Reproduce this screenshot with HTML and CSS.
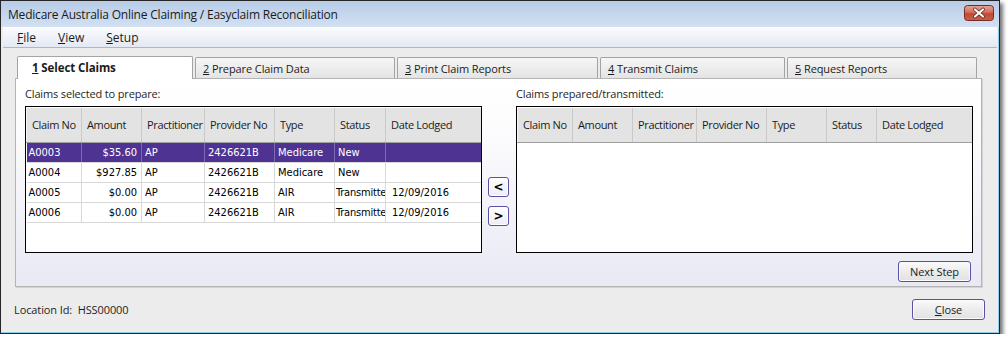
FILE: index.html
```html
<!DOCTYPE html>
<html lang="en">
<head>
<meta charset="utf-8">
<title>Medicare Australia Online Claiming / Easyclaim Reconciliation</title>
<link rel="stylesheet" href="styles.css">
</head>
<body>
<div class="window">
  <div class="titlebar">
    <span class="title">Medicare Australia Online Claiming / Easyclaim Reconciliation</span>
    <svg class="close-x" width="30" height="16" viewBox="0 0 30 16">
      <defs>
        <linearGradient id="cg" x1="0" y1="0" x2="0" y2="1">
          <stop offset="0" stop-color="#e7a597"/>
          <stop offset="0.45" stop-color="#d46f5e"/>
          <stop offset="0.55" stop-color="#c04a36"/>
          <stop offset="1" stop-color="#c9614a"/>
        </linearGradient>
      </defs>
      <rect x="0.5" y="0.5" width="29" height="15" rx="3" fill="url(#cg)" stroke="#7a2a1e"/>
      <path d="M11 4.5 L19 11.5 M19 4.5 L11 11.5" stroke="#5a1e16" stroke-width="3.6" stroke-linecap="round"/>
      <path d="M11 4.5 L19 11.5 M19 4.5 L11 11.5" stroke="#ffffff" stroke-width="2.2" stroke-linecap="round"/>
    </svg>
  </div>
  <div class="menubar">
    <span class="menu"><u>F</u>ile</span>
    <span class="menu"><u>V</u>iew</span>
    <span class="menu"><u>S</u>etup</span>
  </div>
  <div class="content">
    <div class="tabs">
      <div class="tab tab-1 active"><span><u>1</u> Select Claims</span></div>
      <div class="tab tab-2"><span><u>2</u> Prepare Claim Data</span></div>
      <div class="tab tab-3"><span><u>3</u> Print Claim Reports</span></div>
      <div class="tab tab-4"><span><u>4</u> Transmit Claims</span></div>
      <div class="tab tab-5"><span><u>5</u> Request Reports</span></div>
    </div>
    <div class="panel">
      <div class="lists">
        <div class="list-group">
          <div class="list-label">Claims selected to prepare:</div>
          <div class="grid">
            <table>
              <colgroup>
                <col class="c1"><col class="c2"><col class="c3"><col class="c4"><col class="c5"><col class="c6"><col class="c7">
              </colgroup>
              <thead>
                <tr><th>Claim No</th><th>Amount</th><th>Practitioner</th><th>Provider No</th><th>Type</th><th>Status</th><th>Date Lodged</th></tr>
              </thead>
              <tbody>
                <tr class="selected"><td>A0003</td><td class="num">$35.60</td><td>AP</td><td>2426621B</td><td>Medicare</td><td>New</td><td class="date"></td></tr>
                <tr><td>A0004</td><td class="num">$927.85</td><td>AP</td><td>2426621B</td><td>Medicare</td><td>New</td><td class="date"></td></tr>
                <tr><td>A0005</td><td class="num">$0.00</td><td>AP</td><td>2426621B</td><td>AIR</td><td class="status">Transmitted</td><td class="date">12/09/2016</td></tr>
                <tr><td>A0006</td><td class="num">$0.00</td><td>AP</td><td>2426621B</td><td>AIR</td><td class="status">Transmitted</td><td class="date">12/09/2016</td></tr>
              </tbody>
            </table>
          </div>
        </div>
        <div class="movers">
          <button class="mover">&lt;</button>
          <button class="mover">&gt;</button>
        </div>
        <div class="list-group">
          <div class="list-label">Claims prepared/transmitted:</div>
          <div class="grid">
            <table>
              <colgroup>
                <col class="c1"><col class="c2"><col class="c3r"><col class="c4"><col class="c5"><col class="c6r"><col class="c7">
              </colgroup>
              <thead>
                <tr><th>Claim No</th><th>Amount</th><th>Practitioner</th><th>Provider No</th><th>Type</th><th>Status</th><th>Date Lodged</th></tr>
              </thead>
              <tbody></tbody>
            </table>
          </div>
        </div>
      </div>
      <div class="panel-actions">
        <button class="btn">Next Step</button>
      </div>
    </div>
    <div class="footer">
      <span class="location">Location Id:&nbsp; HSS00000</span>
      <button class="btn btn-close"><u>C</u>lose</button>
    </div>
  </div>
</div>
</body>
</html>
```

FILE: styles.css
```css
* { box-sizing: border-box; }

body {
  margin: 0;
  background: #ffffff;
  font-family: "Open Sans", "Noto Sans", sans-serif;
  font-size: 11px;
  color: #1b1b1b;
}

.window {
  width: 1000px;
  height: 334px;
  border: 1px solid #262626;
  background: #ececec;
  box-shadow: inset -1px -1px 0 #93cfe9, 3px 3px 4px rgba(0, 0, 0, 0.55);
  display: flex;
  flex-direction: column;
  overflow: hidden;
}

.titlebar {
  flex: none;
  height: 26px;
  display: flex;
  align-items: center;
  justify-content: space-between;
  padding: 0 5px 0 7px;
  background: linear-gradient(#b8cce7, #d2e0f2);
  font-size: 12px;
  letter-spacing: -0.2px;
  color: #1a1a1a;
}

.close-x { display: block; margin-top: -3px; }

.menubar {
  flex: none;
  height: 21px;
  margin: 0 2px;
  display: flex;
  align-items: center;
  gap: 22px;
  padding-left: 14px;
  background: linear-gradient(#fbfcfe, #e3e8f3);
  border-bottom: 1px solid #a9b7d6;
  font-size: 12px;
}

.content {
  flex: 1;
  display: flex;
  flex-direction: column;
  padding: 8px 14px 0 14px;
}

.tabs {
  display: flex;
  align-items: flex-end;
  gap: 2px;
  margin-left: 2px;
  height: 22px;
  position: relative;
  z-index: 1;
}

.tab {
  height: 21px;
  padding-left: 7px;
  display: flex;
  align-items: center;
  border: 1px solid #a3a3a3;
  border-bottom: none;
  border-radius: 2px 2px 0 0;
  background: linear-gradient(#f6f6f6, #e4e4e4);
  font-size: 11px;
  letter-spacing: -0.1px;
  white-space: nowrap;
}

.tab.active {
  height: 23px;
  margin-bottom: -1px;
  padding-left: 14px;
  padding-bottom: 2px;
  background: #ffffff;
  font-weight: 700;
  font-size: 11.5px;
}

.tab-1 { width: 176px; }
.tab-2 { width: 200px; }
.tab-3 { width: 201px; }
.tab-4 { width: 185px; }
.tab-5 { width: 190px; }

.panel {
  width: 967px;
  height: 209px;
  border: 1px solid #b4b4b4;
  background: linear-gradient(#ffffff, #fbfbfd 30%, #e8e9f3);
  box-shadow: 1px 1px 0 #d3d3d3;
  padding: 8px 8px 4px 9px;
  display: flex;
  flex-direction: column;
}

.lists {
  display: flex;
  align-items: flex-start;
}

.list-group {
  width: 457px;
  display: flex;
  flex-direction: column;
}

.list-label {
  height: 14px;
  line-height: 14px;
  margin-bottom: 5px;
  letter-spacing: -0.15px;
  color: #1e1e1e;
}

.grid {
  width: 457px;
  height: 147px;
  border: 1px solid #000000;
  background: #ffffff;
  padding-top: 1px;
  overflow: hidden;
}

table {
  width: 455px;
  table-layout: fixed;
  border-collapse: collapse;
}

col.c1 { width: 55px; }
col.c2 { width: 60px; }
col.c3 { width: 63px; }
col.c3r { width: 64px; }
col.c4 { width: 70px; }
col.c5 { width: 60px; }
col.c6 { width: 51px; }
col.c6r { width: 50px; }
col.c7 { width: 96px; }

th {
  height: 34px;
  padding: 0 0 0 5px;
  text-align: left;
  font-weight: 400;
  font-size: 11px;
  letter-spacing: -0.35px;
  background: #e3e3e3;
  border-right: 1px solid #c9c9c9;
  border-left: 1px solid #f7f7f7;
  border-bottom: 1px solid #a0a0a0;
  white-space: nowrap;
  overflow: hidden;
}

th:last-child { border-right: none; }

td {
  height: 20px;
  padding: 0 3px;
  font-family: "DejaVu Sans Condensed", "DejaVu Sans", sans-serif;
  font-size: 11px;
  color: #000000;
  border-right: 1px solid #d8d8d8;
  border-bottom: 1px solid #d8d8d8;
  white-space: nowrap;
  overflow: hidden;
  text-overflow: clip;
}

td:first-child { padding-left: 2px; }
td:last-child { border-right: none; }
td.num { text-align: right; padding-right: 4px; }
td.status { padding-left: 1px; padding-right: 0; letter-spacing: -0.2px; }
td.date { padding-left: 6px; }

tr.selected td {
  background: #4f3393;
  color: #ffffff;
  border-right-color: #7d69b3;
}

.movers {
  width: 34px;
  padding: 90px 0 0 6px;
  display: flex;
  flex-direction: column;
  gap: 9px;
}

.mover {
  width: 21px;
  height: 20px;
  padding: 0;
  border: 1px solid #5d4fa3;
  border-radius: 3px;
  background: linear-gradient(#ffffff, #ececf4);
  box-shadow: inset 0 0 0 1px #ffffff;
  font-family: "DejaVu Sans", sans-serif;
  font-weight: 700;
  font-size: 12px;
  line-height: 16px;
  color: #000000;
}

.panel-actions {
  display: flex;
  justify-content: flex-end;
  margin-top: 8px;
  padding-right: 2px;
}

.btn {
  width: 73px;
  height: 21px;
  padding: 0;
  border: 1px solid #5d4fa3;
  border-radius: 3px;
  background: linear-gradient(#fafafa, #ececec 50%, #e2e2e2);
  box-shadow: inset 0 0 0 1px #fbfbfb;
  font-family: "Open Sans", "Noto Sans", sans-serif;
  font-size: 11px;
  letter-spacing: -0.1px;
  color: #1b1b1b;
}

.footer {
  display: flex;
  align-items: center;
  justify-content: space-between;
  padding-top: 12px;
}

.location {
  margin-left: -1px;
  letter-spacing: -0.1px;
  color: #1e1e1e;
}
```
